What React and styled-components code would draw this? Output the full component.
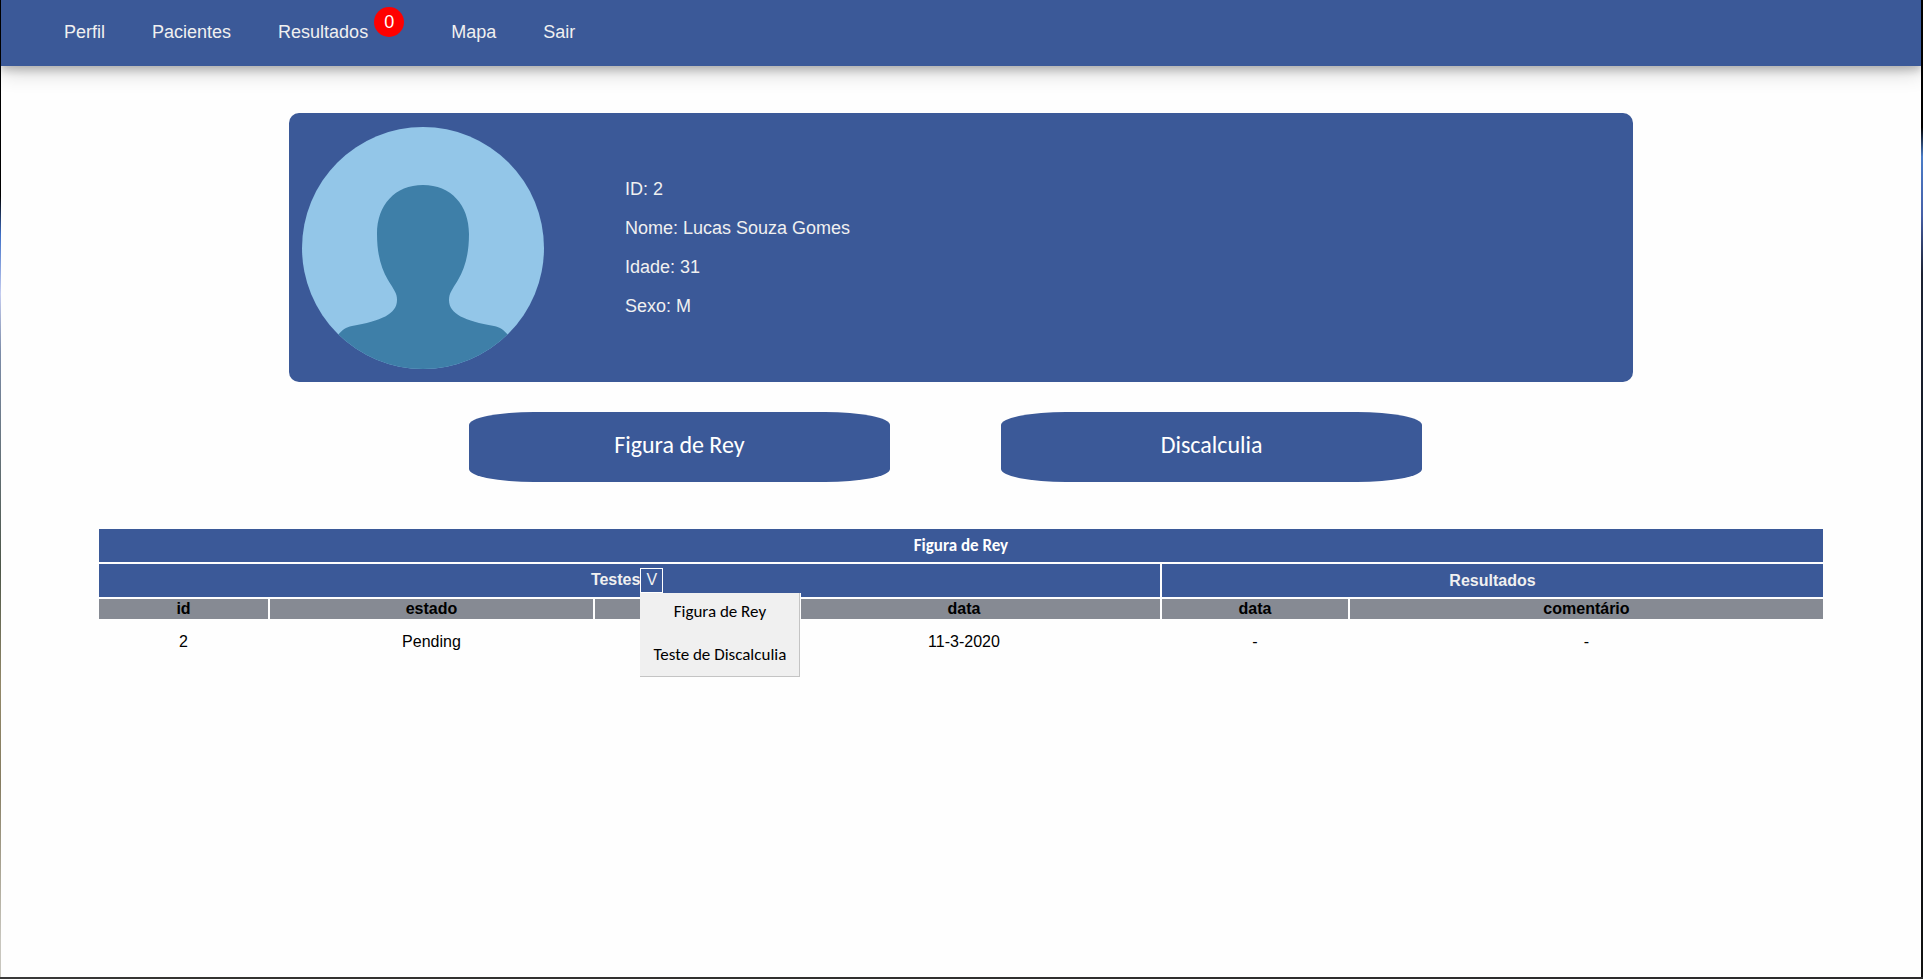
import React from "react";
import styled, { createGlobalStyle } from "styled-components";

const BLUE = "#3b5998";
const SANS = `Arial, "Liberation Sans", sans-serif`;
const HUMANIST = `Carlito, Lato, "Open Sans", sans-serif`;

const GlobalStyle = createGlobalStyle`
  * { box-sizing: border-box; }
  body { margin: 0; font-family: ${SANS}; font-size: 16px; line-height: 18px; color: #000; }
  button { font: inherit; cursor: pointer; }
`;

const Desktop = styled.div`
  min-height: 100vh;
  display: flex;
  padding: 0 2px 2px 1px;
  background:
    linear-gradient(90deg, #3a3a3a, #343330 10%, #2b2a2b) bottom / 100% 2px no-repeat,
    linear-gradient(#000 13%, #4a7cc8 16%, #4660a8 22%, #1c2233 28%, #10151c 60%, #111 100%) right / 2px 100% no-repeat,
    linear-gradient(#000 20%, #3f70c8 24%, #c4ccf0 30%, #7c8ca8 36%, #4c5648 58%, #928868 70%, #857c60 80%, #c8c6be 96%) left / 1px 100% no-repeat;
`;

const Page = styled.div`
  flex: 1;
  min-width: 0;
  background: #fefefe;
`;

const Header = styled.header`
  background: ${BLUE};
  padding: 7px 63px 29px;
  box-shadow: 0 4px 8px rgba(0, 0, 0, 0.2), 0 6px 20px rgba(0, 0, 0, 0.19);
  clip-path: inset(0 0 -40px 0);
`;

const Nav = styled.nav`
  display: flex;
  gap: 47px;
  min-height: 30px;
`;

const NavLink = styled.a`
  display: flex;
  align-items: flex-start;
  gap: 6px;
  color: #f0f0f0;
  font-size: 18px;
  line-height: 22px;
  text-decoration: none;
`;

const NavLabel = styled.span`
  padding-top: 14px;
  margin-bottom: -6px;
`;

const Badge = styled.span`
  width: 30px;
  height: 30px;
  border-radius: 50%;
  background: #f00;
  color: #fff;
  line-height: 30px;
  text-align: center;
`;

const Card = styled.section`
  width: 70%;
  margin: 47px auto 0;
  padding: 14px 13px 13px;
  border-radius: 10px;
  background: ${BLUE};
  display: flex;
  align-items: center;
  gap: 81px;
`;

const Avatar = styled.svg`
  width: 242px;
  height: 242px;
  flex: none;
`;

const Details = styled.div`
  display: flex;
  flex-direction: column;
  gap: 18px;
  color: #f0f0f0;
  font-size: 18px;
  line-height: 21px;
  p { margin: 0; }
`;

const Actions = styled.div`
  display: flex;
  justify-content: center;
  gap: 111px;
  margin: 30px 31px 0 0;
`;

const TestButton = styled.button`
  width: 22.3%;
  height: 70px;
  padding: 0 0 4px;
  border: 0;
  border-radius: 65px / 13px;
  background: ${BLUE};
  color: #fff;
  font-family: ${HUMANIST};
  font-size: 24px;
  line-height: 28px;
`;

const Table = styled.table`
  width: 90%;
  margin: 45px auto 0;
  table-layout: fixed;
  border-spacing: 2px;
  text-align: center;
`;

const GroupHead = styled.th`
  height: 33px;
  padding: 4px 0;
  background: ${BLUE};
  color: #f0f0f0;
`;

const TitleHead = styled(GroupHead)`
  color: #fff;
  font-family: ${HUMANIST};
  font-size: 17px;
`;

const ColumnHead = styled.th`
  padding: 1px 0;
  background: #868a93;
`;

const Cell = styled.td`
  padding: 12px 0;
`;

const Dropdown = styled.div`
  position: relative;
  display: inline-block;
  margin-right: 5px;
  font-weight: 400;
`;

const DropdownToggle = styled.button`
  display: block;
  height: 25px;
  padding: 0 5px 1px;
  border: 1px solid #fff;
  background: ${BLUE};
  color: #f0f0f0;
`;

const Menu = styled.div`
  position: absolute;
  top: 100%;
  left: 0;
  width: 160px;
  padding: 6px 0 8px;
  display: flex;
  flex-direction: column;
  gap: 17px;
  background: #f0f0f0;
  border: solid #c4c4c4;
  border-width: 0 1px 1px 0;
  box-shadow: 1px 0 #fefefe;
`;

const MenuItem = styled.button`
  padding: 0;
  border: 0;
  background: none;
  color: #000;
  font-family: ${HUMANIST};
  font-size: 17px;
  line-height: 26px;
  white-space: nowrap;
`;

const links = [
  { label: "Perfil" },
  { label: "Pacientes" },
  { label: "Resultados", count: 0 },
  { label: "Mapa" },
  { label: "Sair" },
];

const columnWidths = ["9.86%", "18.84%", "9.98%", "22.87%", "10.85%", "27.6%"];
const columns = ["id", "estado", "", "data", "data", "comentário"];
const rows = [["2", "Pending", "", "11-3-2020", "-", "-"]];

export default function App() {
  return (
    <Desktop>
      <GlobalStyle />
      <Page>
        <Header>
          <Nav>
            {links.map(({ label, count }) => (
              <NavLink href="#" key={label}>
                <NavLabel>{label}</NavLabel>
                {count !== undefined && <Badge>{count}</Badge>}
              </NavLink>
            ))}
          </Nav>
        </Header>
        <main>
          <Card>
            <Avatar viewBox="0 0 242 242" role="img" aria-label="Foto do paciente">
              <defs>
                <clipPath id="avatar-circle">
                  <circle cx="121" cy="121" r="121" />
                </clipPath>
              </defs>
              <g clipPath="url(#avatar-circle)">
                <rect width="242" height="242" fill="#93c6e8" />
                <path
                  fill="#3e7fa8"
                  d="M121 58C149 58 167 78 167 107C167 127 163 141 156 153C150 163 147 166 147 173C147 187 163 194 192 199C198 200 202 203 206 208V242H36V208C40 203 44 200 50 199C79 194 95 187 95 173C95 166 92 163 86 153C79 141 75 127 75 107C75 78 93 58 121 58Z"
                />
              </g>
            </Avatar>
            <Details>
              <p>ID: 2</p>
              <p>Nome: Lucas Souza Gomes</p>
              <p>Idade: 31</p>
              <p>Sexo: M</p>
            </Details>
          </Card>
          <Actions>
            <TestButton type="button">Figura de Rey</TestButton>
            <TestButton type="button">Discalculia</TestButton>
          </Actions>
          <Table>
            <colgroup>
              {columnWidths.map((width, i) => (
                <col key={i} style={{ width }} />
              ))}
            </colgroup>
            <thead>
              <tr>
                <TitleHead colSpan={6}>Figura de Rey</TitleHead>
              </tr>
              <tr>
                <GroupHead colSpan={4}>
                  Testes
                  <Dropdown>
                    <DropdownToggle type="button" aria-expanded="true">V</DropdownToggle>
                    <Menu>
                      <MenuItem type="button">Figura de Rey</MenuItem>
                      <MenuItem type="button">Teste de Discalculia</MenuItem>
                    </Menu>
                  </Dropdown>
                </GroupHead>
                <GroupHead colSpan={2}>Resultados</GroupHead>
              </tr>
              <tr>
                {columns.map((name, i) => (
                  <ColumnHead key={i}>{name}</ColumnHead>
                ))}
              </tr>
            </thead>
            <tbody>
              {rows.map((row) => (
                <tr key={row[0]}>
                  {row.map((value, i) => (
                    <Cell key={i}>{value}</Cell>
                  ))}
                </tr>
              ))}
            </tbody>
          </Table>
        </main>
      </Page>
    </Desktop>
  );
}
